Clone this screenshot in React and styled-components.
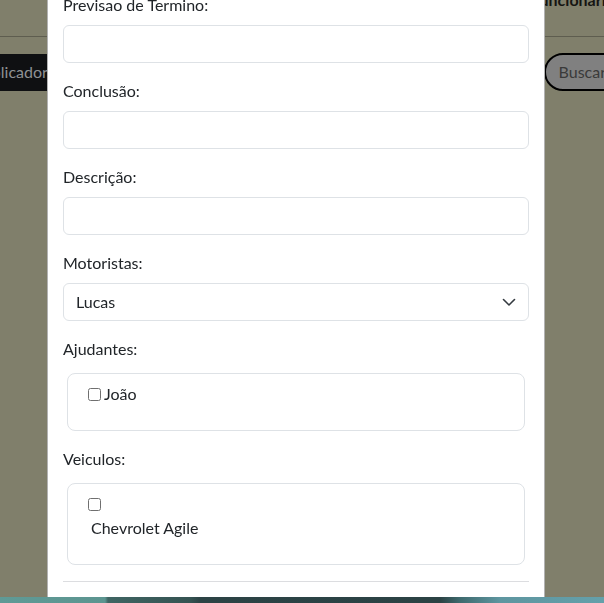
import React from 'react';
import styled, { createGlobalStyle } from 'styled-components';

const GlobalStyle = createGlobalStyle`
  html, body {
    margin: 0;
    padding: 0;
    height: 100%;
    overflow: hidden;
  }
  body {
    background: #807f6b;
    font-family: Lato, "Liberation Sans", sans-serif;
    font-size: 16px;
    line-height: 24px;
    color: #212529;
  }
`;

const Page = styled.div`
  height: 100vh;
  display: flex;
  flex-direction: column;
  overflow: hidden;
`;

const Header = styled.header`
  height: 36px;
  flex-shrink: 0;
  border-bottom: 1px solid #5e5d4f;
  display: flex;
  justify-content: flex-end;
  align-items: flex-start;
`;

const NavLink = styled.span`
  margin-top: -12px;
  margin-right: -18px;
  font-weight: 700;
  color: #151512;
  white-space: nowrap;
`;

const Toolbar = styled.div`
  margin-top: 16px;
  display: flex;
  justify-content: space-between;
  align-items: center;
`;

const DarkButton = styled.div`
  margin-left: -31px;
  height: 37px;
  padding: 0 12px;
  display: flex;
  align-items: center;
  background: #0f1012;
  color: #8e9194;
  white-space: nowrap;
`;

const SearchButton = styled.div`
  margin-right: -44px;
  height: 34px;
  padding: 0 40px 0 13px;
  display: flex;
  align-items: center;
  border: 2px solid #000;
  border-radius: 20px;
  background: #808080;
  color: #3a3a3a;
`;

const Spacer = styled.div`
  flex: 1;
`;

const BottomStrip = styled.div`
  height: 6px;
  flex-shrink: 0;
  background: linear-gradient(
    to right,
    #5f9a96 0,
    #5c9590 105px,
    #3f6563 108px,
    #355352 190px,
    #2c4345 200px,
    #2b4244 440px,
    #3e6a6e 460px,
    #5e96a0 500px,
    #64a0aa 604px
  );
`;

const Overlay = styled.div`
  position: fixed;
  top: 0;
  left: 0;
  right: 0;
  bottom: 6px;
  overflow: hidden;
`;

const Dialog = styled.div`
  margin: -23px 0 0 47px;
  width: 498px;
  box-sizing: border-box;
  background: #fff;
  border: 1px solid rgba(0, 0, 0, 0.3);
  border-radius: 8px;
`;

const Body = styled.div`
  padding: 15px 15px 80px;
`;

const Group = styled.div`
  margin-bottom: 16px;
`;

const Label = styled.label`
  display: block;
  margin-bottom: 8px;
  color: #212529;
`;

const Input = styled.input`
  display: block;
  width: 100%;
  box-sizing: border-box;
  height: 38px;
  padding: 6px 12px;
  font: inherit;
  color: #212529;
  background: #fff;
  border: 1px solid #dee2e6;
  border-radius: 6px;
  outline: none;
`;

const SelectWrap = styled.div`
  position: relative;
`;

const Select = styled.select`
  display: block;
  width: 100%;
  box-sizing: border-box;
  height: 38px;
  padding: 6px 36px 6px 12px;
  font: inherit;
  color: #212529;
  background: #fff;
  border: 1px solid #dee2e6;
  border-radius: 6px;
  appearance: none;
  outline: none;
`;

const Chevron = styled.svg`
  position: absolute;
  right: 13px;
  top: 13px;
  pointer-events: none;
`;

const CheckBox = styled.div`
  margin: 12px 4px 0;
  padding: 8px;
  border: 1px solid #dee2e6;
  border-radius: 8px;
`;

const List = styled.div`
  margin: 0 0 16px;
  padding-left: 8px;
`;

const Item = styled.label`
  display: ${(p) => (p.$stacked ? 'block' : 'flex')};
  align-items: center;
`;

const Check = styled.input`
  appearance: none;
  width: 13px;
  height: 13px;
  margin: 3px 3px 3px 4px;
  box-sizing: border-box;
  border: 1px solid #6f6f6f;
  border-radius: 2.5px;
  background: #fff;
  vertical-align: middle;
`;

const CheckLine = styled.div`
  height: 24px;
  display: flex;
  align-items: center;
`;

const StackedText = styled.div`
  padding-left: 7px;
`;

const Divider = styled.hr`
  margin: 16px 0;
  border: 0;
  border-top: 1px solid #dcdde0;
`;

export default function App() {
  return (
    <>
      <GlobalStyle />
      <Page>
        <Header>
          <NavLink>Funcionarios</NavLink>
        </Header>
        <Toolbar>
          <DarkButton>Aplicadores</DarkButton>
          <SearchButton>Buscar</SearchButton>
        </Toolbar>
        <Spacer />
        <BottomStrip />
      </Page>
      <Overlay>
        <Dialog>
          <Body>
            <Group>
              <Label>Previsao de Termino:</Label>
              <Input type="text" />
            </Group>
            <Group>
              <Label>Conclusão:</Label>
              <Input type="text" />
            </Group>
            <Group>
              <Label>Descrição:</Label>
              <Input type="text" />
            </Group>
            <Group>
              <Label>Motoristas:</Label>
              <SelectWrap>
                <Select defaultValue="lucas">
                  <option value="lucas">Lucas</option>
                </Select>
                <Chevron width="14" height="12" viewBox="1 2 14 12">
                  <path
                    d="m2.5 5.5 5.5 5.5 5.5-5.5"
                    fill="none"
                    stroke="#343a40"
                    strokeWidth="1.6"
                    strokeLinecap="round"
                    strokeLinejoin="round"
                  />
                </Chevron>
              </SelectWrap>
            </Group>
            <Group>
              <Label>Ajudantes:</Label>
              <CheckBox>
                <List>
                  <Item>
                    <Check type="checkbox" />
                    João
                  </Item>
                </List>
              </CheckBox>
            </Group>
            <Group>
              <Label>Veiculos:</Label>
              <CheckBox>
                <List>
                  <Item $stacked>
                    <CheckLine>
                      <Check type="checkbox" />
                    </CheckLine>
                    <StackedText>Chevrolet Agile</StackedText>
                  </Item>
                </List>
              </CheckBox>
            </Group>
            <Divider />
          </Body>
        </Dialog>
      </Overlay>
    </>
  );
}
